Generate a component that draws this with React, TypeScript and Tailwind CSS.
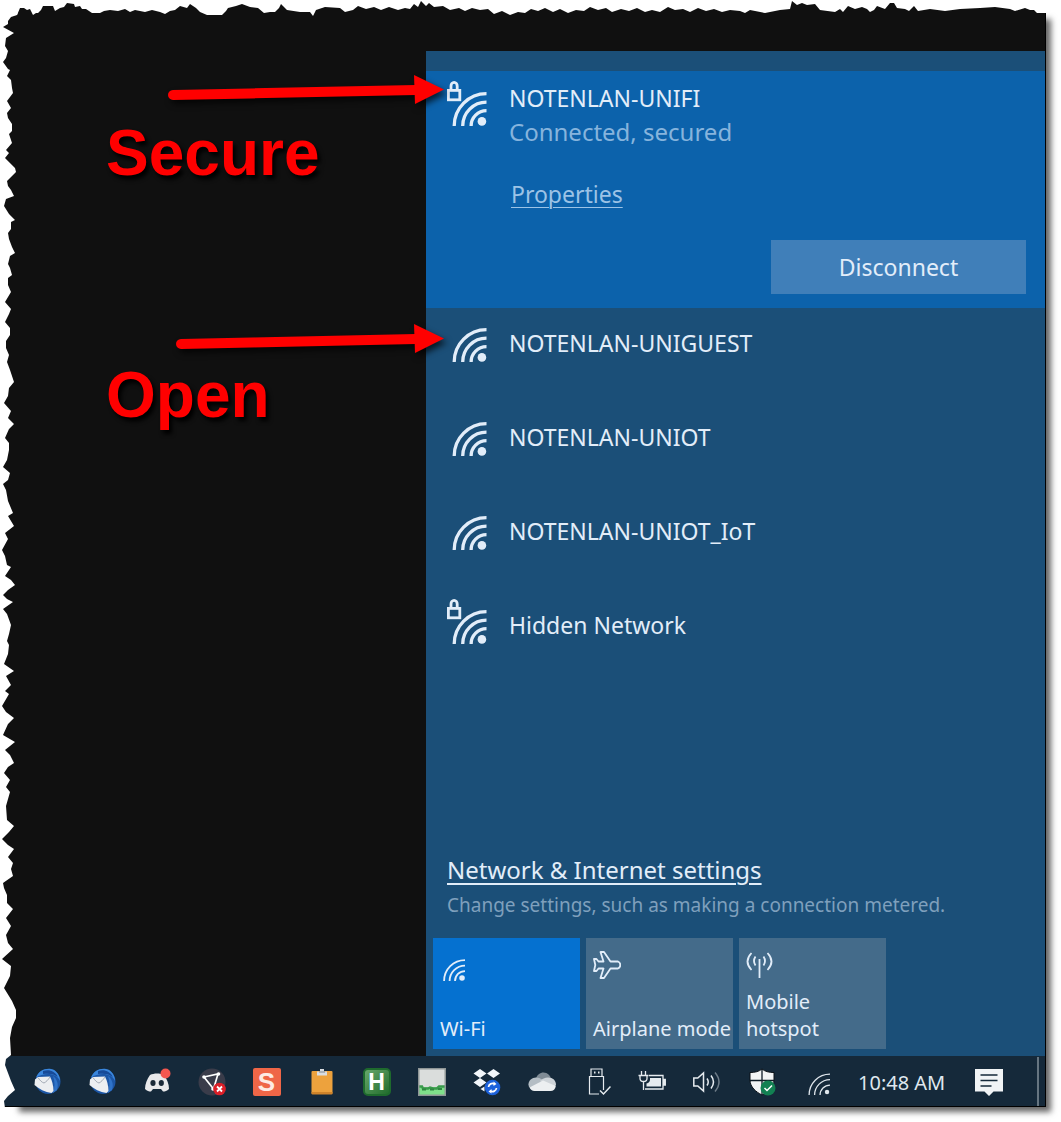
import type { ReactNode } from 'react';

type Network = { ssid: string; secured: boolean };

const networks: Network[] = [
  { ssid: 'NOTENLAN-UNIGUEST', secured: false },
  { ssid: 'NOTENLAN-UNIOT', secured: false },
  { ssid: 'NOTENLAN-UNIOT_IoT', secured: false },
  { ssid: 'Hidden Network', secured: true },
];

const LEFT_EDGE =
  '20,8 17,15 11,17 8,21 8,24 3,27 14,33 6,38 5,46 8,51 6,58 3,62 8,69 10,70 7,76 11,80 12,88 13,93 7,101 11,108 7,113 8,118 12,124 12,131 9,134 12,143 6,150 9,153 5,158 15,168 16,172 7,181 8,186 11,190 14,196 6,199 ' +
  '4,206 9,214 15,220 11,222 11,229 8,233 9,239 12,247 15,253 10,256 8,264 10,268 12,275 8,278 8,285 11,292 5,302 11,309 9,314 5,322 10,328 10,335 6,341 6,348 9,355 7,362 10,370 14,382 9,388 8,396 4,403 11,411 8,418 14,424 9,429 5,438 9,443 9,450 7,460 ' +
  '3,467 10,473 8,480 3,484 6,490 8,501 13,513 8,516 14,526 5,533 8,539 2,550 5,556 7,565 11,567 5,576 11,580 15,585 8,590 3,595 7,599 13,602 3,609 7,614 11,625 9,634 7,641 9,645 8,654 4,664 14,671 6,676 11,685 5,691 9,694 2,706 6,712 14,718 8,724 ' +
  '3,735 15,742 5,750 10,755 14,763 8,767 4,773 10,780 6,787 10,792 6,806 7,820 14,826 9,832 2,839 8,845 14,849 8,857 13,863 11,869 13,876 3,883 4,888 7,895 7,903 13,909 6,918 11,926 6,935 8,943 13,949 2,959 11,966 10,976 4,988 12,1001 16,1010 16,1018 12,1027 10,1038 11,1055 ' +
  '6,1059 5,1065 8,1073 11,1081 15,1090 8,1096 4,1101 5,1108';

const TOP_EDGE =
  '17,15 19,8 24,8 27,10 30,9 33,15 36,13 38,13 41,10 43,6 53,6 55,11 60,8 64,7 67,3 74,4 75,7 80,6 82,9 86,9 92,13 100,13 104,11 110,10 118,11 125,9 130,12 135,10 145,12 152,10 160,12 165,14 170,11 175,10 180,6 187,8 190,4 196,8 200,12 207,15 222,15 226,11 228,8 236,6 242,4 250,7 258,8 264,13 270,12 275,12 279,8 281,4 287,10 300,12 310,12 313,16 316,10 325,7 340,8 345,12 353,10 358,6 ' +
  '366,9 374,7 381,10 389,7 398,10 405,8 410,9 414,4 418,7 421,1 426,6 429,3 434,7 443,6 450,10 459,8 465,11 472,8 480,10 488,9 494,14 502,11 510,15 518,12 525,13 531,9 538,11 545,8 553,12 560,9 568,13 576,10 584,11 590,7 598,10 606,8 612,12 621,9 629,11 637,8 645,12 652,10 660,12 668,7 675,10 683,9 690,12 698,8 706,11 714,9 722,12 730,10 ' +
  '740,11 745,13 750,10 765,13 780,10 790,9 792,1 797,5 802,3 807,5 815,4 820,10 835,12 840,9 843,12 848,6 855,9 862,7 867,9 870,12 874,10 877,6 885,9 890,3 894,3 897,8 905,9 909,11 914,6 918,11 930,9 945,11 960,9 980,8 995,7 1010,9 1015,11 1025,8 1030,10 1034,10 1037,13 1046,13';

function TornEdges() {
  return (
    <div className="pointer-events-none absolute -bottom-px -right-px left-0 top-0 z-20" aria-hidden="true">
      <svg className="absolute left-0 top-0 h-full w-5" viewBox="0 0 20 1107" preserveAspectRatio="none">
        <polygon points={`0,0 20,0 ${LEFT_EDGE} 0,1108`} fill="#fff" />
      </svg>
      <svg className="absolute left-0 top-0 h-4 w-full" viewBox="0 0 1046 16" preserveAspectRatio="none">
        <polygon points={`0,0 0,16 ${TOP_EDGE} 1046,0`} fill="#fff" />
      </svg>
    </div>
  );
}

function WifiArcs({ stroke = 3.3, dot = 4.3 }: { stroke?: number; dot?: number }) {
  return (
    <g>
      <g fill="none" stroke="currentColor" strokeWidth={stroke}>
        <path d="M1.7 34A32.3 32.3 0 0 1 34 1.7" />
        <path d="M10.2 34A23.8 23.8 0 0 1 34 10.2" />
        <path d="M18.6 34A15.4 15.4 0 0 1 34 18.6" />
      </g>
      <circle cx="29.4" cy="29.4" r={dot} fill="currentColor" />
    </g>
  );
}

function SignalIcon({ secured }: { secured: boolean }) {
  return (
    <svg className="h-[46px] w-10 shrink-0 text-[#e2edf9]" viewBox="0 0 40 46" aria-hidden="true">
      {secured && (
        <g fill="none" stroke="currentColor" strokeWidth="2.8">
          <rect x="1.4" y="9.4" width="11.4" height="9.4" />
          <path d="M4 9V5a3.1 3.6 0 0 1 6.2 0v4" />
        </g>
      )}
      <g transform="translate(5.5 11)">
        <WifiArcs />
      </g>
    </svg>
  );
}

function Arrow({ tail, className }: { tail: number; className: string }) {
  return (
    <svg
      className={`pointer-events-none absolute -right-5 z-10 h-9 w-[280px] overflow-visible drop-shadow-[3px_4px_3px_rgba(0,0,0,0.7)] ${className}`}
      viewBox="0 0 280 36"
      aria-hidden="true"
    >
      <path d={`M${tail} 23L250 18`} stroke="#f00" strokeWidth="10" strokeLinecap="round" />
      <path d="M248 3L278 17.5L249 32Z" fill="#f00" />
    </svg>
  );
}

function Tile({ label, active, children }: { label: string; active?: boolean; children: ReactNode }) {
  return (
    <button
      aria-pressed={!!active}
      className={`flex h-[111px] w-[147px] flex-col justify-between px-[7px] pb-[7px] pt-[13px] text-left text-[20px] leading-[27px] ${
        active ? 'bg-[#0571d0]' : 'bg-[#446b8a]'
      }`}
    >
      {children}
      <span className="whitespace-pre">{label}</span>
    </button>
  );
}

function Thunderbird() {
  return (
    <svg viewBox="0 0 28 28" className="size-7">
      <circle cx="15" cy="13.5" r="12.5" fill="#1c56a6" />
      <path d="M3 10C5 3 12 0 18 1c6 1 9 7 9 12-2-5-7-7-12-7-4 0-9 1-12 4z" fill="#3a86dc" />
      <path d="M10 3c6-2 12 0 15 6-4-3-9-4-15-3z" fill="#174a98" />
      <path d="M20 8c4 3 6 8 4 14l-4 3c2-6 2-11 0-17z" fill="#2f73c9" />
      <path d="M2 11.5L5 9l12-.5c2 4 3.500 9 3.500 14.500l-2 2C12 24 6 21 1.500 17z" fill="#eceef1" />
      <path d="M5 9.500c2 3 4 5 6 5.500 2-1 4-3 6-6" fill="none" stroke="#a4abb6" strokeWidth="1" />
    </svg>
  );
}

function Discord() {
  return (
    <svg viewBox="0 0 28 28" className="size-7">
      <path d="M7 7c4-2 10-2 14 0 3 4 5 9 5 14-2 2-4 2.500-6 2.500L18 21h-8l-2 2.500c-2 0-4-.5-6-2.500 0-5 2-10 5-14z" fill="#e9e9eb" />
      <ellipse cx="10" cy="15" rx="2.6" ry="3" fill="#1b2a38" />
      <ellipse cx="18.3" cy="15" rx="2.6" ry="3" fill="#1b2a38" />
      <circle cx="22.5" cy="5.5" r="5" fill="#f4574f" />
    </svg>
  );
}

function GraphDisconnected() {
  return (
    <svg viewBox="0 0 28 28" className="size-7">
      <circle cx="14" cy="14" r="13.5" fill="#3a3c4a" />
      <path d="M6 9L20 6L15.5 21Z" fill="none" stroke="#fff" strokeWidth="1.7" />
      <circle cx="6" cy="9" r="1.8" fill="#fff" />
      <circle cx="20.5" cy="6" r="1.8" fill="#fff" />
      <circle cx="15" cy="21" r="1.8" fill="#fff" />
      <circle cx="21.5" cy="21" r="6.3" fill="#dc1f28" />
      <path d="M19 18.5l5 5m0-5l-5 5" stroke="#fff" strokeWidth="1.8" />
    </svg>
  );
}

function Snagit() {
  return (
    <span className="flex size-7 items-center justify-center rounded-xs bg-[#ef6647] font-['Liberation_Sans',sans-serif] text-[26px] font-bold leading-7 text-[#fdeae3]">
      S
    </span>
  );
}

function Clipboard() {
  return (
    <svg viewBox="0 0 28 28" className="size-7">
      <rect x="3.5" y="3" width="21" height="23" rx="1" fill="#eda23d" />
      <path d="M3.5 24h21v1.500q0 1-1 1h-19q-1 0-1-1z" fill="#cf832a" />
      <path d="M9 7.500V3.500h3V1h4v2.500h3v4z" fill="#d9dde2" />
      <path d="M11 4h6" stroke="#7d8790" />
    </svg>
  );
}

function HotkeyIcon() {
  return (
    <span className="flex size-7 items-center justify-center rounded-[5px] border-2 border-[#1e6a2d] bg-linear-to-br from-[#67a86b] to-[#1f6d2c] font-['Liberation_Sans',sans-serif] text-[23px] font-bold leading-6 text-white">
      H
    </span>
  );
}

function MeterIcon() {
  return (
    <svg viewBox="0 0 28 28" className="size-7">
      <rect x="0.5" y="0.5" width="27" height="27" fill="#dadddc" />
      <path d="M1 19h26v8H1z" fill="#7fe08a" />
      <path d="M1 18.500h3l1 2h5l2-1 3 1h4l2-2h6" fill="none" stroke="#3a9a4c" strokeWidth="2.500" />
      <path d="M4 21.500h4m4 0h4m4-.5h4" stroke="#2f8741" strokeWidth="2" />
      <rect x="0.75" y="0.75" width="26.500" height="26.500" fill="none" stroke="#8f9696" strokeWidth="1.500" />
    </svg>
  );
}

function DropboxSync() {
  return (
    <svg viewBox="0 0 28 28" className="size-7">
      <g fill="#f2f6fa">
        <path d="M7 1l6.500 4.500L7 10 .5 5.500zM20.500 1L27 5.500 20.500 10 14 5.500zM7 10l6.500 4.500L7 19 .5 14.500z" />
        <path d="M7.500 21l4-2.500v5z" />
      </g>
      <circle cx="19.500" cy="19.500" r="7.800" fill="#1d62dc" />
      <path d="M15.500 19a4 4 0 0 1 6-3m2 4a4 4 0 0 1-6 3" fill="none" stroke="#fff" strokeWidth="1.700" />
      <path d="M20.500 13.500l3 2.500-3 2zM18.500 21l-3 2.500 3 2z" fill="#fff" />
    </svg>
  );
}

function Cloud() {
  return (
    <svg viewBox="0 0 28 28" className="size-7">
      <path d="M8 10.500C9 7 12 4.500 15.500 4.500c4 0 7 3 7.500 6.500l-5 5z" fill="#7f8b95" />
      <path d="M1 19C-1 14 3 9.500 8 9.500c3 0 5 1 7 3L4 21z" fill="#b4bdc4" />
      <path d="M12 13c2-2 5-3.500 8-3.500 5 0 8 3 8 7.500l-3 4z" fill="#ced4d9" />
      <path d="M1.500 19.500L15 12.500l12.800 5.500c-.3 3-2.500 5-5.300 5H6.500c-2.500 0-4-1.500-5-3.500z" fill="#eceff1" />
    </svg>
  );
}

function UsbEject() {
  return (
    <svg viewBox="0 0 28 28" className="size-7" fill="none" stroke="#e6ebef" strokeWidth="1.200">
      <path d="M8 8V1h11v7" />
      <path d="M16 26H6.500V8.500h14V22" />
      <path d="M11 4.500h1.500m2.500 0h1.500" strokeWidth="2" />
      <path d="M17 22.500l3.500 3.500 7-7.500" strokeWidth="1.500" />
    </svg>
  );
}

function BatteryPlug() {
  return (
    <svg viewBox="0 0 28 28" className="size-7" fill="none" stroke="#e6ebef" strokeWidth="1.300">
      <path d="M11 7.500h14V21H7" />
      <path d="M25 11.500h2.300v5.500H25" fill="#e6ebef" />
      <path d="M12 10h11v8.500H8.500v-3q3.500-1 3.500-4z" fill="#e6ebef" stroke="none" />
      <path d="M3.500 3v4.500m4-4.500v4.500M.5 7.500h10M2 7.500v3q0 3 3.500 3t3.500-3v-3M5.500 13.500V22" />
    </svg>
  );
}

function Speaker() {
  return (
    <svg viewBox="0 0 28 28" className="size-7" fill="none" stroke="#e6ebef" strokeWidth="1.500">
      <path d="M.8 10h4L10.500 5v18L4.800 18h-4z" />
      <path d="M14 10.500q2.500 3.500 0 7M18 7.500q5 6.500 0 13" />
      <path d="M22 4.500q8 9.500 0 19" stroke="#6d7b88" />
    </svg>
  );
}

function Shield() {
  return (
    <svg viewBox="0 0 28 28" className="size-7">
      <path d="M14 1c3 2.500 7 3.500 12 3.500V12c0 7-6 12-12 15C8 24 2 19 2 12V4.500C7 4.500 11 3.500 14 1z" fill="#f2f4f5" stroke="#0a1016" />
      <path d="M14 1v26M2 12.500h24" stroke="#0f1c27" strokeWidth="1.300" />
      <circle cx="20" cy="20" r="7.500" fill="#128052" />
      <path d="M16.500 20l2.500 2.500 5-5" fill="none" stroke="#fff" strokeWidth="1.500" />
    </svg>
  );
}

function TrayWifi() {
  return (
    <svg viewBox="0 0 34 34" className="ml-1 mt-1 size-[22px] text-[#dfe6ec]">
      <WifiArcs stroke={2} dot={3.4} />
    </svg>
  );
}

const tray: { label: string; icon: ReactNode }[] = [
  { label: 'Mail', icon: <Thunderbird /> },
  { label: 'Mail, second profile', icon: <Thunderbird /> },
  { label: 'Discord', icon: <Discord /> },
  { label: 'VPN disconnected', icon: <GraphDisconnected /> },
  { label: 'Snagit', icon: <Snagit /> },
  { label: 'Clipboard', icon: <Clipboard /> },
  { label: 'AutoHotkey', icon: <HotkeyIcon /> },
  { label: 'Network meter', icon: <MeterIcon /> },
  { label: 'Dropbox', icon: <DropboxSync /> },
  { label: 'OneDrive', icon: <Cloud /> },
  { label: 'Eject media', icon: <UsbEject /> },
  { label: 'Battery', icon: <BatteryPlug /> },
  { label: 'Volume', icon: <Speaker /> },
  { label: 'Security', icon: <Shield /> },
  { label: 'Network', icon: <TrayWifi /> },
];

function Annotations() {
  return (
    <div className="relative flex-1 pl-[106px] pt-[70px] font-['Liberation_Sans',Arial,sans-serif] text-[64px] font-bold leading-[64px] text-[#f00] [text-shadow:3px_4px_4px_#000]">
      <Arrow tail={7} className="top-[21px]" />
      <p>Secure</p>
      <Arrow tail={15} className="top-[270px]" />
      <p className="mt-[178px]">Open</p>
    </div>
  );
}

function NetworkFlyout() {
  return (
    <section className="flex w-[619px] shrink-0 flex-col bg-[#1b4f78] pt-5 text-[23px] text-[#e2edf9]">
      <div className="flex gap-[22px] bg-[#0c62ab] pb-[14px] pl-[21px] pr-[19px] pt-[10px]">
        <SignalIcon secured />
        <div className="flex flex-1 flex-col items-start leading-[34px]">
          <h2>NOTENLAN-UNIFI</h2>
          <p className="text-[24px] text-[#86b4dd]">Connected, secured</p>
          <a href="#properties" className="ml-0.5 mt-7 text-[#9cc3e6] underline decoration-1 underline-offset-4">
            Properties
          </a>
          <button className="mt-[29px] h-[54px] w-[255px] self-end bg-[#407fb9]">Disconnect</button>
        </div>
      </div>

      <ul>
        {networks.map((n) => (
          <li key={n.ssid} className="flex h-[94px] gap-[22px] pl-[21px] pt-[9px]">
            <SignalIcon secured={n.secured} />
            <span className="mt-[9px] leading-[34px]">{n.ssid}</span>
          </li>
        ))}
      </ul>

      <div className="mt-[170px] pl-[21px]">
        <a href="#settings" className="block text-[24px] leading-8 underline decoration-2 underline-offset-4">
          Network &amp; Internet settings
        </a>
        <p className="mt-[3px] text-[19px] leading-8 text-[#7fa0bd]">Change settings, such as making a connection metered.</p>
      </div>

      <div className="mt-[17px] flex gap-[6px] pb-[7px] pl-[7px]">
        <Tile label="Wi-Fi" active>
          <svg viewBox="0 0 34 34" className="ml-[3px] mt-2 size-[22px]">
            <WifiArcs stroke={2.8} />
          </svg>
        </Tile>
        <Tile label="Airplane mode">
          <svg viewBox="0 0 28 28" className="size-7" fill="none" stroke="currentColor" strokeWidth="1.800" strokeLinejoin="round">
            <path d="M7.500 1h3.500l6.500 9.500H25q2.300 1 2.300 3.500T25 17.500h-7.500L11 27H7.500L10.500 17.500H5.500L3.500 20H1l1.300-6L1 8h2.500l2 2.500h5z" />
          </svg>
        </Tile>
        <Tile label={'Mobile\nhotspot'}>
          <svg viewBox="0 0 28 28" className="h-7 w-7 shrink-0" fill="none" stroke="currentColor" strokeWidth="1.800">
            <path d="M13.500 8v19M9.500 5.500q-3 4.500 0 9M17.500 5.500q3 4.500 0 9M5.500 2q-8 8.500 0 17M21.500 2q8 8.500 0 17" />
          </svg>
        </Tile>
      </div>
    </section>
  );
}

function Taskbar() {
  return (
    <footer className="flex h-[50px] items-center bg-[#15293a] pl-[19px] pt-px">
      {tray.map((t) => (
        <button key={t.label} aria-label={t.label} className="flex w-[55px] shrink-0 items-center justify-center">
          {t.icon}
        </button>
      ))}
      <time className="ml-[14px] w-[117px] whitespace-nowrap pt-0.5 text-[20px] text-[#dfe7ee]">10:48 AM</time>
      <button aria-label="Notifications">
        <svg viewBox="0 0 28 28" className="size-7">
          <path d="M0 1h28v22.500h-9.500L14 28l-4.500-4.500H0z" fill="#f1f4f6" />
          <path d="M5.500 7h17M5.500 12.500h17M5.500 18h11" stroke="#15293a" strokeWidth="1.500" />
        </svg>
      </button>
      <div className="ml-auto mr-[6px] h-full w-0.5 bg-[#667581]" />
    </footer>
  );
}

export default function App() {
  return (
    <div className="min-h-screen bg-white pb-4 pr-[15px] font-['Noto_Sans','Open_Sans',sans-serif]">
      <main className="relative border-b border-r border-black bg-[#101010] pt-[51px] shadow-[12px_12px_6px_-7px_#666]">
        <div className="flex">
          <Annotations />
          <NetworkFlyout />
        </div>
        <Taskbar />
        <TornEdges />
      </main>
    </div>
  );
}
